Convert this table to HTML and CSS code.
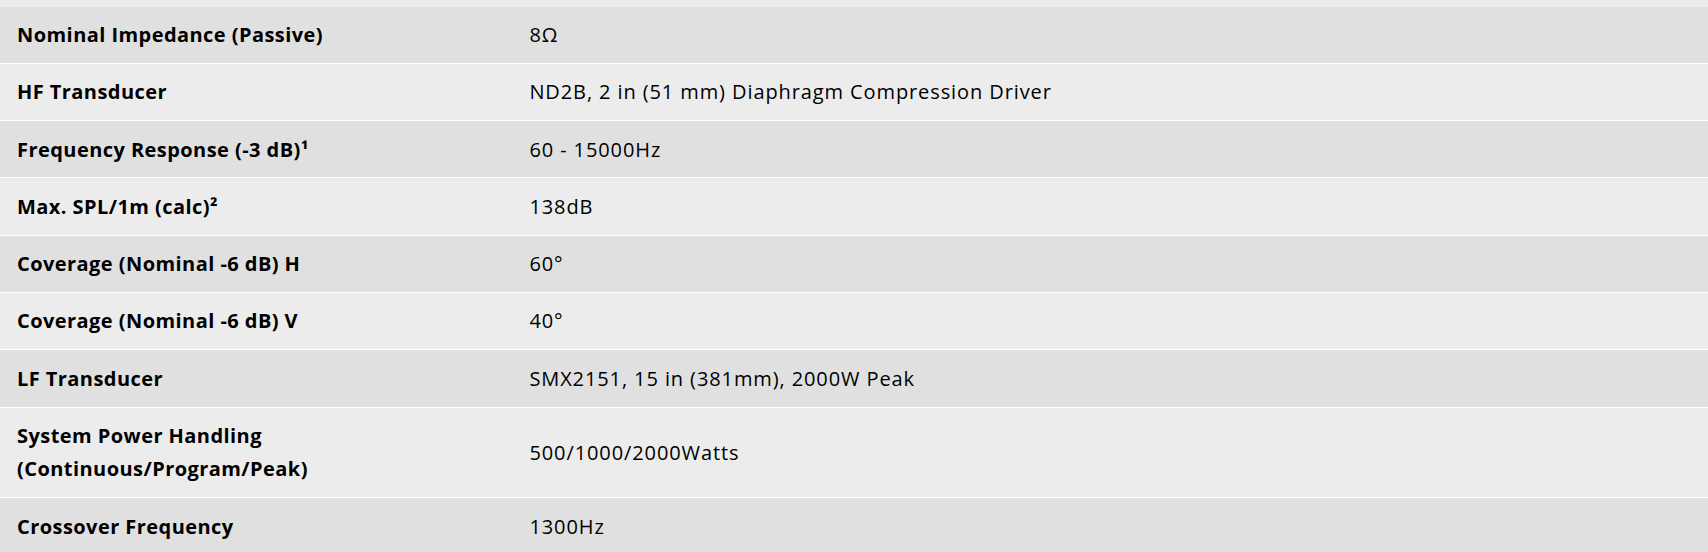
FILE: index.html
```html
<!DOCTYPE html>
<html lang="en">
<head>
  <meta charset="UTF-8">
  <title>Technical Specifications</title>
  <link rel="stylesheet" href="styles.css">
</head>
<body>

  <div class="spec-list">
    <table class="spec-table">
      <tr class="dark">
        <th>Nominal Impedance (Passive)</th>
        <td>8Ω</td>
      </tr>
      <tr>
        <th>HF Transducer</th>
        <td>ND2B, 2 in (51 mm) Diaphragm Compression Driver</td>
      </tr>
      <tr class="dark">
        <th>Frequency Response (-3 dB)¹</th>
        <td>60 - 15000Hz</td>
      </tr>
      <tr>
        <th>Max. SPL/1m (calc)²</th>
        <td>138dB</td>
      </tr>
      <tr class="dark">
        <th>Coverage (Nominal -6 dB) H</th>
        <td>60°</td>
      </tr>
      <tr>
        <th>Coverage (Nominal -6 dB) V</th>
        <td>40°</td>
      </tr>
      <tr class="dark">
        <th>LF Transducer</th>
        <td>SMX2151, 15 in (381mm), 2000W Peak</td>
      </tr>
      <tr>
        <th>System Power Handling<br>(Continuous/Program/Peak)</th>
        <td>500/1000/2000Watts</td>
      </tr>
      <tr class="dark">
        <th>Crossover Frequency</th>
        <td>1300Hz</td>
      </tr>
    </table>
  </div>

</body>
</html>
```
FILE: styles.css
```css
body {
  margin: 0;
  font-family: "Open Sans", "Noto Sans", sans-serif;
  color: #000;
  background: #fff;
}

.spec-list {
  background: #ececec;
  padding-top: 6.6px;
}

.spec-table {
  width: 100%;
  border-collapse: collapse;
  table-layout: fixed;
}

.spec-table tr {
  background: #ececec;
  border-bottom: 1px solid #fff;
}

.spec-table tr.dark {
  background: #e0e0e0;
}

.spec-table th,
.spec-table td {
  box-sizing: border-box;
  padding: 11.4px 17px;
  font-size: 20px;
  line-height: 33.5px;
  text-align: left;
  vertical-align: middle;
}

.spec-table th {
  width: 30%;
  font-weight: 700;
  letter-spacing: 0.44px;
}

.spec-table td {
  font-weight: 400;
  letter-spacing: 0.9px;
}
```
